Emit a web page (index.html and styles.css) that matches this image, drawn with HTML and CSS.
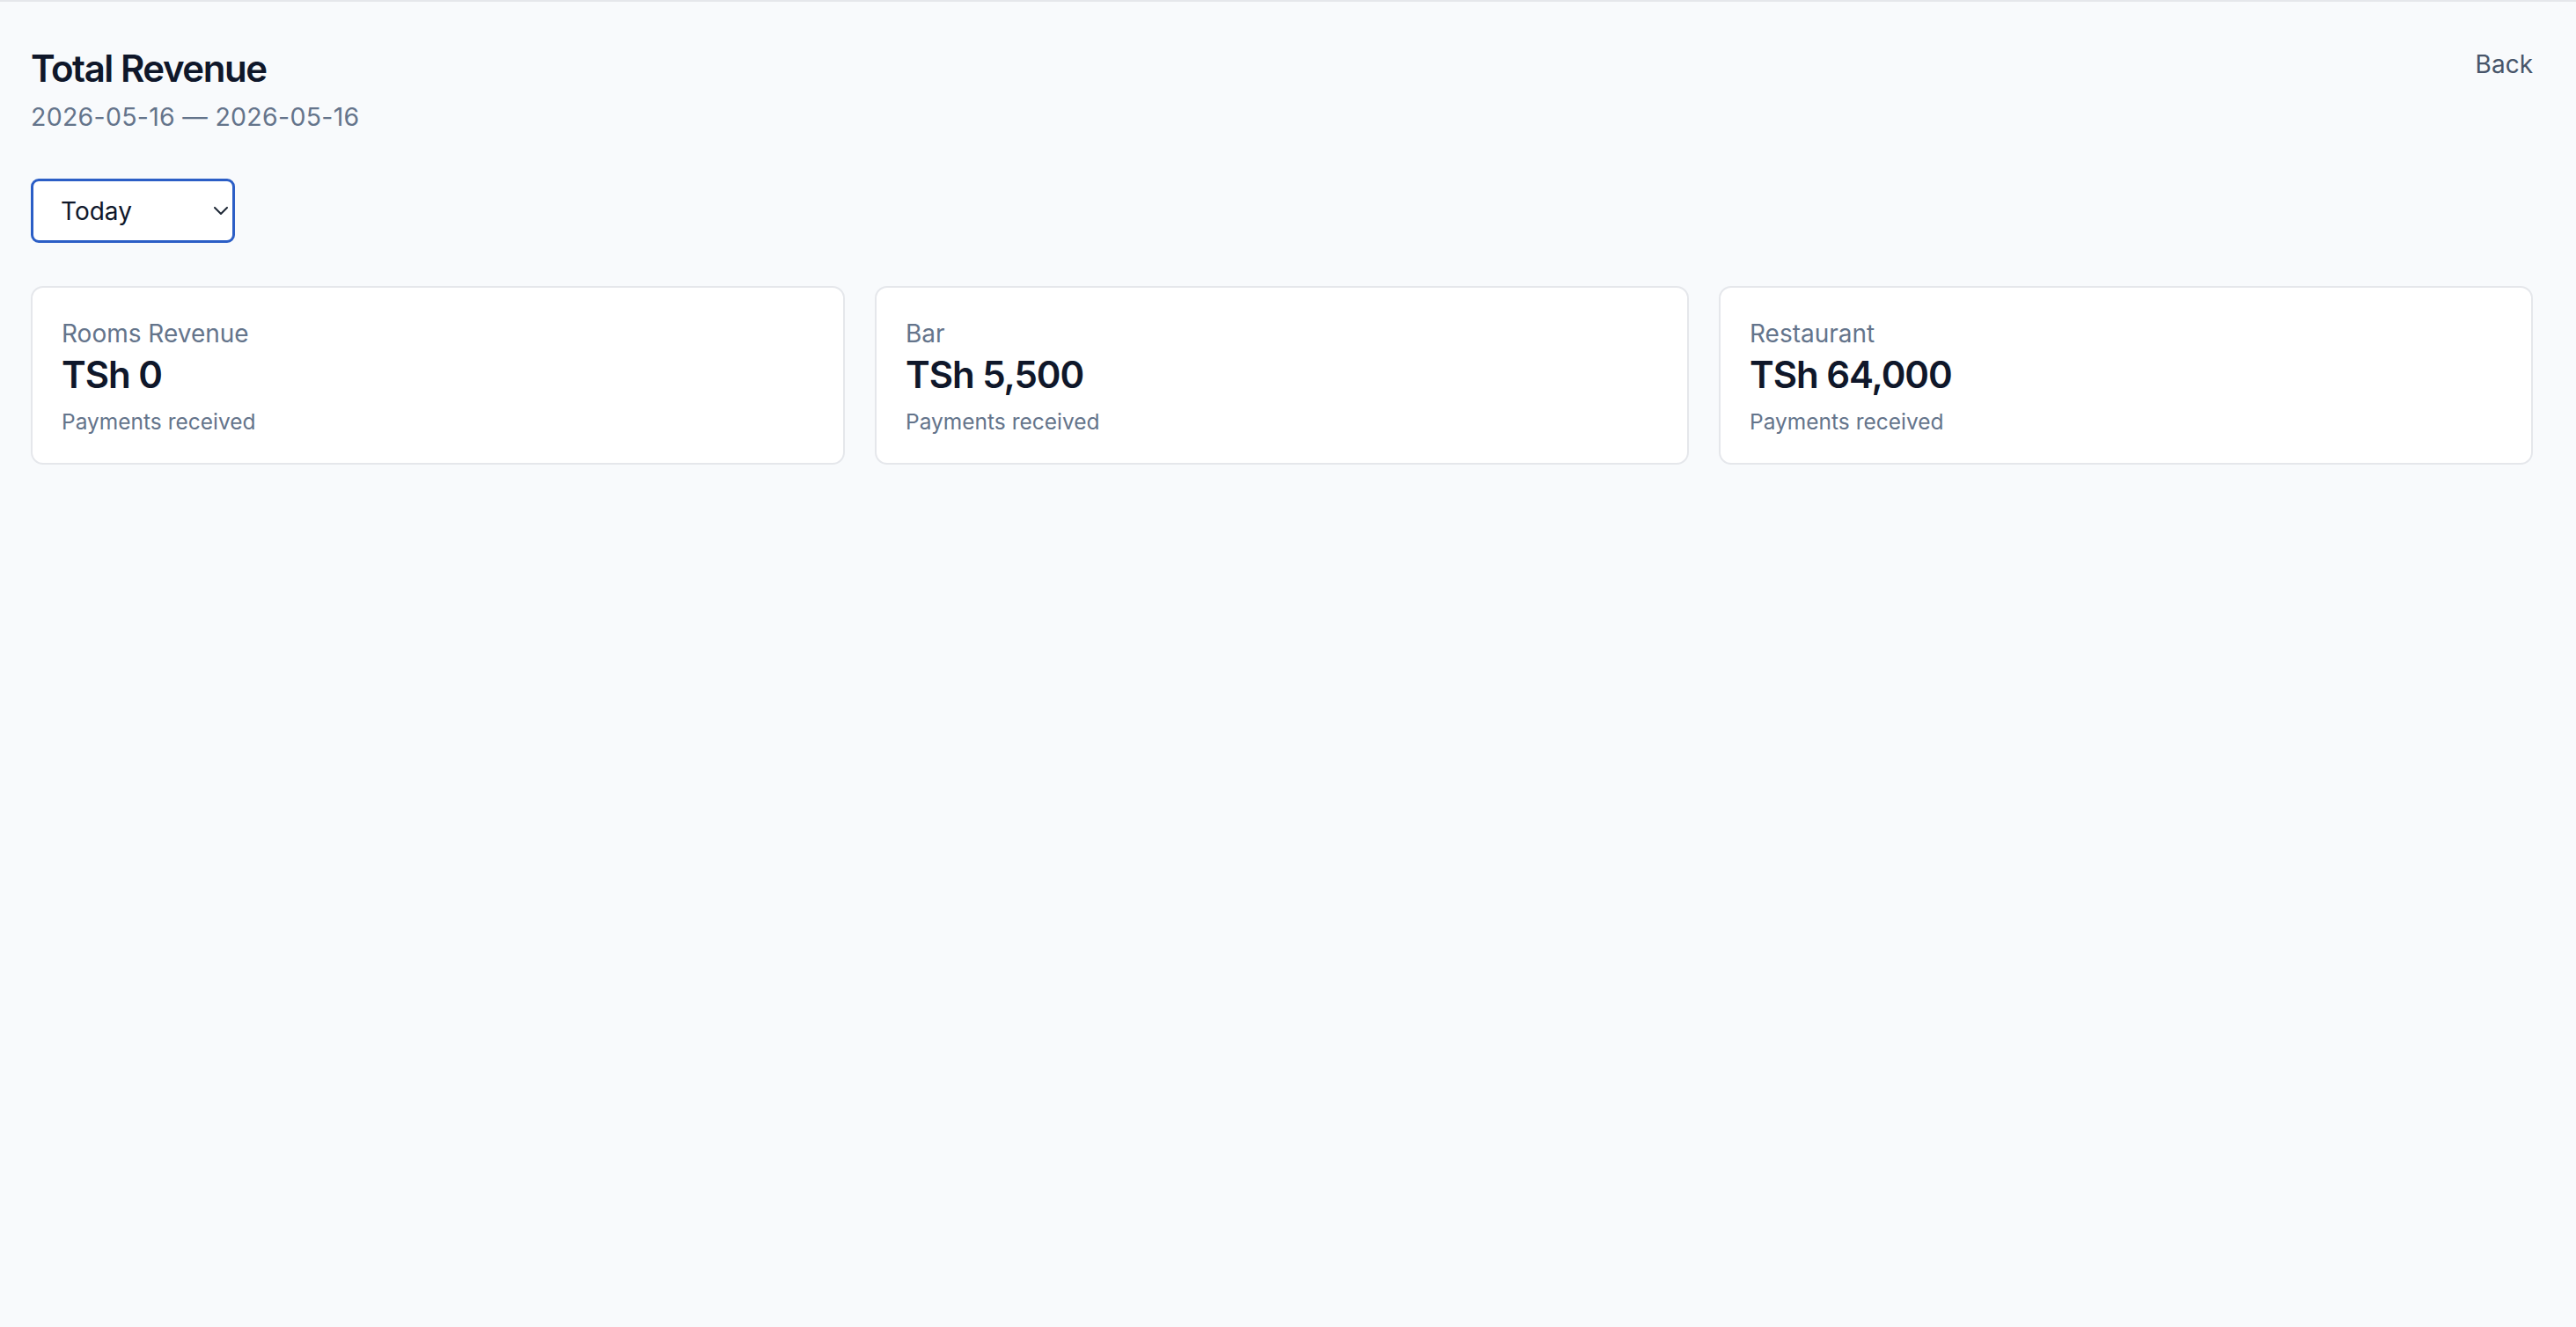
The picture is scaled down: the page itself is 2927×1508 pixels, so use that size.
FILE: index.html
```html
<!DOCTYPE html>
<html lang="en">
<head>
  <meta charset="UTF-8">
  <title>Total Revenue</title>
  <link rel="stylesheet" href="styles.css">
</head>
<body>

  <div class="page">

    <!-- Header -->
    <div class="page-head">
      <div>
        <h1 class="title">Total Revenue</h1>
        <p class="range">2026-05-16 — 2026-05-16</p>
      </div>
      <a class="back" href="#">Back</a>
    </div>

    <!-- Period filter -->
    <div class="filter">
      <select class="period">
        <option selected>Today</option>
        <option>Yesterday</option>
        <option>This week</option>
        <option>This month</option>
      </select>
      <svg class="chevron" viewBox="0 0 16 9" width="16" height="9">
        <path d="M1 1l7 7 7-7" fill="none" stroke="#1f2937" stroke-width="2" stroke-linecap="round" stroke-linejoin="round"/>
      </svg>
    </div>

    <!-- Cards -->
    <div class="cards">
      <div class="card">
        <div class="card-label">Rooms Revenue</div>
        <div class="card-value">TSh 0</div>
        <div class="card-note">Payments received</div>
      </div>
      <div class="card">
        <div class="card-label">Bar</div>
        <div class="card-value">TSh 5,500</div>
        <div class="card-note">Payments received</div>
      </div>
      <div class="card">
        <div class="card-label">Restaurant</div>
        <div class="card-value">TSh 64,000</div>
        <div class="card-note">Payments received</div>
      </div>
    </div>

  </div>

</body>
</html>
```

FILE: styles.css
```css
* {
  margin: 0;
  padding: 0;
  box-sizing: border-box;
}

body {
  background-color: #f8fafc;
  color: #0f172a;
  font-family: Inter, 'Noto Sans', sans-serif;
  border-top: 2px solid #e5e7eb;
  min-height: 100vh;
}

.page {
  padding: 48px 49px 40px 35px;
}

.page-head {
  display: flex;
  justify-content: space-between;
  align-items: flex-start;
  margin-bottom: 49px;
}

.title {
  font-size: 42px;
  line-height: 56px;
  font-weight: 600;
  letter-spacing: -0.035em;
}

.range {
  font-size: 28.5px;
  line-height: 42px;
  color: #64748b;
  letter-spacing: 0.01em;
  margin-top: 6px;
}

.back {
  font-size: 28px;
  line-height: 42px;
  color: #475569;
  text-decoration: none;
  margin-top: 2px;
}

.filter {
  position: relative;
  width: 232px;
  margin-bottom: 49px;
}

.period {
  appearance: none;
  width: 232px;
  height: 73px;
  padding: 0 40px 0 31px;
  font-family: inherit;
  font-size: 28px;
  color: #0f172a;
  background: #ffffff;
  border: 3px solid #2b5ec6;
  border-radius: 9px;
  outline: none;
}

.chevron {
  position: absolute;
  right: 8px;
  top: 32px;
  pointer-events: none;
}

.cards {
  display: grid;
  grid-template-columns: repeat(3, 1fr);
  gap: 34px;
}

.card {
  background: #ffffff;
  border: 2px solid #e5e7eb;
  border-radius: 14px;
  padding: 31px 33px 33px;
  height: 203px;
}

.card-label {
  font-size: 28px;
  line-height: 42px;
  color: #64748b;
}

.card-value {
  font-size: 42px;
  line-height: 52px;
  font-weight: 600;
  letter-spacing: -0.025em;
}

.card-note {
  font-size: 24.5px;
  line-height: 35px;
  color: #64748b;
  margin-top: 10px;
}
```
